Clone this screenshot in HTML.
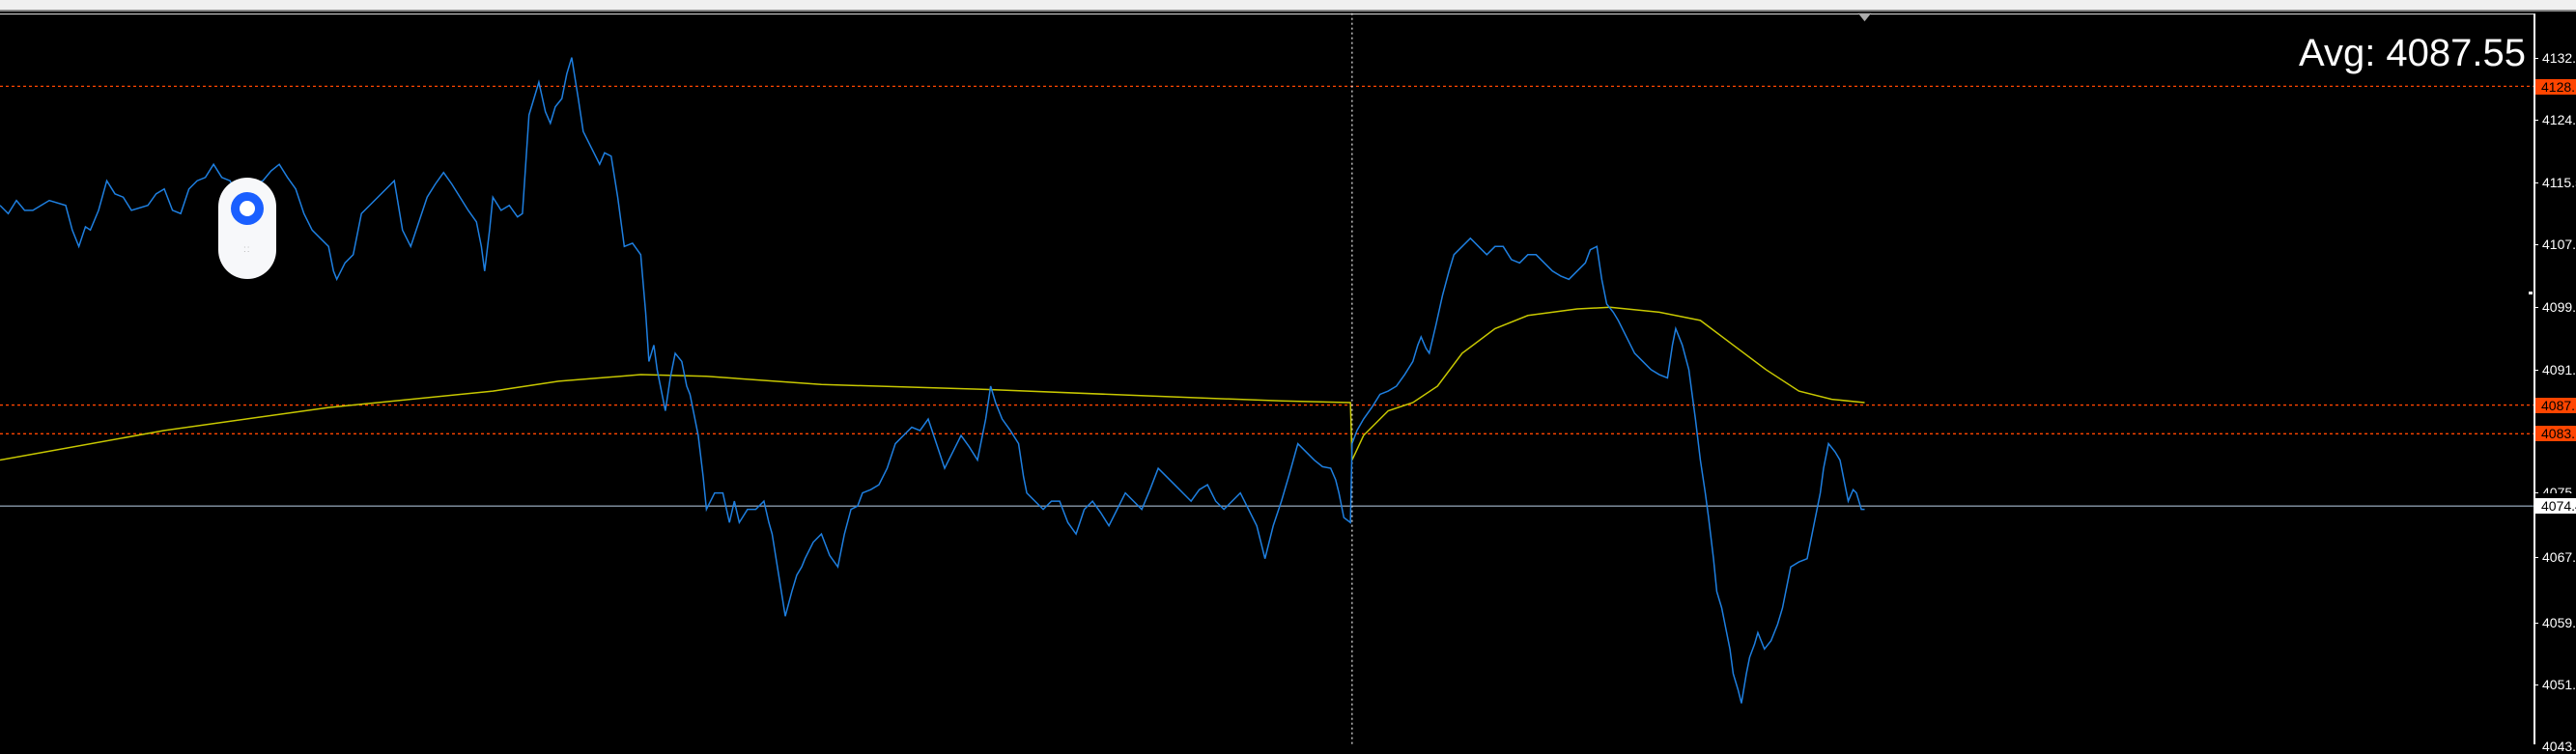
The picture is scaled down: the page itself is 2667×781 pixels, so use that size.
<!DOCTYPE html>
<html><head><meta charset="utf-8"><style>
html,body{margin:0;padding:0;background:#000;width:2667px;height:771px;overflow:hidden;font-family:"Liberation Sans",sans-serif}
.top{position:absolute;left:0;top:0;width:2667px;height:10px;background:#f0f0f0;border-bottom:2px solid #888}
.lbl{position:absolute;left:2632px;color:#fff;font-size:14px;line-height:16px;white-space:nowrap}
.tag{position:absolute;left:2625px;width:50px;height:16px;background:#ff4500;color:#000;font-size:14px;line-height:16px;padding-left:6px;box-sizing:border-box}
.tick{position:absolute;left:2623px;width:5px;height:1px;background:#fff}
</style></head><body>
<div class="top"></div>
<div style="position:absolute;left:0;top:14px;width:2623px;height:1px;background:#ddd"></div>
<div style="position:absolute;left:2623px;top:14px;width:2px;height:757px;background:#fff"></div>
<div style="position:absolute;left:2380px;top:30px;color:#fff;font-size:40px;line-height:50px">Avg: 4087.55</div>
<svg style="position:absolute;left:0;top:0" width="2667" height="771" viewBox="0 0 1568 453" preserveAspectRatio="none">
<line x1="0" y1="52.5" x2="1542" y2="52.5" stroke="#ff4500" stroke-dasharray="3,3" vector-effect="non-scaling-stroke" stroke-width="1.3"/>
<line x1="0" y1="246.5" x2="1542" y2="246.5" stroke="#ff4500" stroke-dasharray="3,3" vector-effect="non-scaling-stroke" stroke-width="1.3"/>
<line x1="0" y1="264" x2="1542" y2="264" stroke="#ff4500" stroke-dasharray="3,3" vector-effect="non-scaling-stroke" stroke-width="1.3"/>
<line x1="0" y1="308" x2="1542" y2="308" stroke="#8899aa" vector-effect="non-scaling-stroke" stroke-width="1.3"/>
<line x1="823" y1="8" x2="823" y2="453" stroke="#ddd" stroke-dasharray="2,3" vector-effect="non-scaling-stroke" stroke-width="1.3"/>
<polygon points="1131,8 1139,8 1135,13" fill="#aaa"/>
<polyline fill="none" stroke="#c8c800" vector-effect="non-scaling-stroke" stroke-width="1.5" points="0,280 100,262 200,248 300,238 340,232 390,228 430,229 500,234 600,237 700,241 780,244 822,245 823,280 830,265 845,250 860,245 875,235 890,215 910,200 930,192 960,188 980,187 1010,190 1035,195 1055,210 1075,225 1095,238 1115,243 1135,245"/>
<polyline fill="none" stroke="#1e7fe0" vector-effect="non-scaling-stroke" stroke-width="1.5" points="0,125 5,130 10,122 15,128 20,128 30,122 40,125 44,140 48,150 52,138 55,140 60,128 65,110 70,118 75,120 80,128 90,125 95,118 100,115 105,128 110,130 115,115 120,110 125,108 130,100 135,108 140,110 145,120 150,118 155,112 160,110 165,104 170,100 175,108 180,115 185,130 190,140 195,145 200,150 203,165 205,170 210,160 215,155 218,140 220,130 225,125 230,120 235,115 240,110 245,140 250,150 255,135 260,120 265,112 270,105 275,112 280,120 285,128 290,135 293,150 295,165 298,140 300,120 305,128 310,125 315,132 318,130 320,100 322,70 325,60 328,50 332,68 335,75 338,65 342,60 345,45 348,35 352,60 355,80 360,90 365,100 368,93 372,95 376,120 380,150 385,148 390,155 393,190 395,220 398,210 400,225 403,240 405,250 408,230 411,215 415,220 418,235 420,240 423,255 425,265 428,290 430,310 435,300 440,300 444,318 447,305 450,318 455,310 460,310 465,305 468,318 470,325 474,350 478,375 482,360 485,350 488,345 490,340 495,330 500,325 505,338 510,345 514,325 518,310 522,308 525,300 530,298 535,295 540,285 545,270 550,265 555,260 560,262 565,255 570,270 575,285 580,275 585,265 590,272 595,280 600,255 603,235 606,245 610,255 615,262 620,270 623,290 625,300 630,305 635,310 640,305 645,305 650,318 655,325 660,310 665,305 670,312 675,320 680,310 685,300 690,305 695,310 700,298 705,285 710,290 715,295 720,300 725,305 730,298 735,295 740,305 745,310 750,305 755,300 760,310 765,320 770,340 775,320 780,305 785,288 790,270 795,275 800,280 805,284 810,285 813,292 815,300 818,315 822,318 823,270 826,262 830,255 835,248 840,240 845,238 850,235 855,228 860,220 863,210 865,205 868,212 870,215 874,198 878,180 882,165 885,155 890,150 895,145 900,150 905,155 910,150 915,150 920,158 925,160 930,155 935,155 940,160 945,165 950,168 955,170 960,165 965,160 968,152 972,150 975,170 978,185 982,190 985,195 990,205 995,215 1000,220 1005,225 1010,228 1015,230 1018,210 1020,200 1024,210 1028,225 1032,255 1035,280 1038,300 1040,315 1043,340 1045,360 1048,370 1050,380 1053,395 1055,410 1058,420 1060,428 1063,410 1065,400 1068,392 1070,385 1074,395 1078,390 1082,380 1085,370 1088,355 1090,345 1095,342 1100,340 1104,320 1108,300 1110,285 1113,270 1117,275 1120,280 1123,295 1125,305 1128,298 1130,300 1133,310 1135,310"/>
</svg>
<div style="position:absolute;left:226px;top:184px;width:60px;height:105px;background:#f7f8fa;border-radius:30px"></div>
<div style="position:absolute;left:239px;top:199px;width:34px;height:34px;background:#1a5fff;border-radius:50%"></div>
<div style="position:absolute;left:248px;top:208px;width:16px;height:16px;background:#fff;border-radius:50%"></div>
<div style="position:absolute;left:252px;top:256px;color:#bbb;font-size:10px;line-height:6px;letter-spacing:1px">::</div>

<div class="tick" style="top:60px"></div><div class="lbl" style="top:52px">4132.0</div>
<div class="tag" style="top:82px">4128.</div>
<div class="tick" style="top:124px"></div><div class="lbl" style="top:116px">4124.0</div>
<div class="tick" style="top:189px"></div><div class="lbl" style="top:181px">4115.5</div>
<div class="tick" style="top:253px"></div><div class="lbl" style="top:245px">4107.5</div>
<div class="tick" style="top:318px"></div><div class="lbl" style="top:310px">4099.5</div>
<div class="tick" style="top:383px"></div><div class="lbl" style="top:375px">4091.5</div>
<div class="tag" style="top:412px">4087.</div>
<div class="tag" style="top:441px">4083.</div>
<div style="position:absolute;left:2618px;top:302px;width:4px;height:3px;background:#fff"></div>
<div class="tick" style="top:510px"></div><div class="lbl" style="top:502px;height:9px;overflow:hidden">4075.5</div>
<div style="position:absolute;left:2625px;top:516px;width:50px;height:16px;background:#fff;color:#000;font-size:14px;line-height:16px;padding-left:6px;box-sizing:border-box">4074.4</div>
<div class="tick" style="top:577px"></div><div class="lbl" style="top:569px">4067.5</div>
<div class="tick" style="top:645px"></div><div class="lbl" style="top:637px">4059.5</div>
<div class="tick" style="top:709px"></div><div class="lbl" style="top:701px">4051.5</div>
<div class="lbl" style="top:765px">4043.5</div>
</body></html>
